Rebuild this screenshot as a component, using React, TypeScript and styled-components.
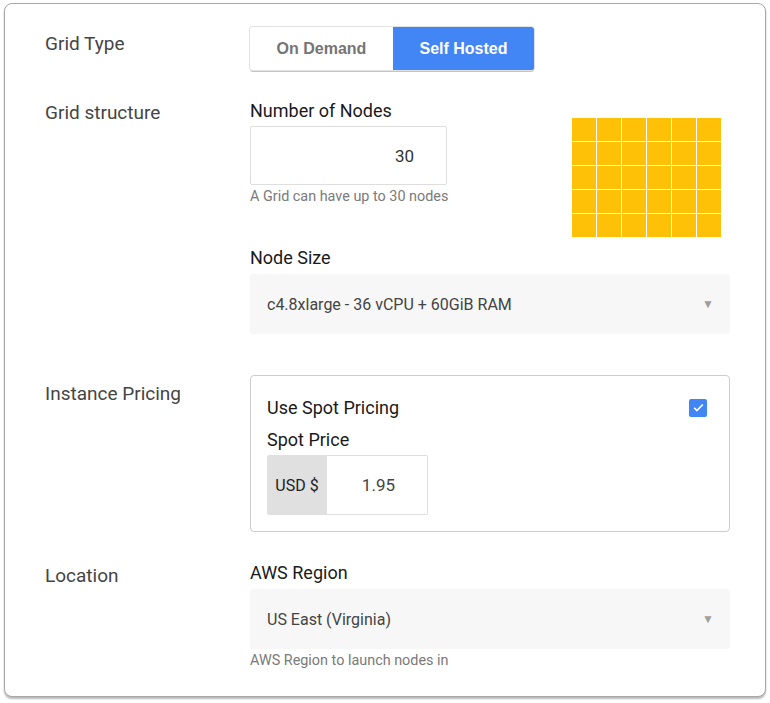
import React from "react";
import styled, { createGlobalStyle } from "styled-components";

const Global = createGlobalStyle`
  html, body { margin: 0; padding: 0; background: #fff; }
  body { font-family: Roboto, "Noto Sans", Arial, sans-serif; }
  * { box-sizing: border-box; }
`;

const Card = styled.div`
  margin: 3px 4px;
  width: 762px;
  height: 694px;
  border: 1px solid #a8a8a8;
  border-radius: 8px;
  box-shadow: 0 2px 2px rgba(0, 0, 0, 0.28);
  padding: 23px 35px 0 40px;
  background: #fff;
`;

const Section = styled.div<{ $mt?: number }>`
  display: grid;
  grid-template-columns: 205px 480px;
  margin-top: ${(p) => p.$mt ?? 0}px;
`;

const SideLabel = styled.div<{ $pt?: number }>`
  font-size: 19px;
  line-height: 22px;
  color: #454545;
  padding-top: ${(p) => p.$pt ?? 0}px;
`;

const Column = styled.div`
  display: flex;
  flex-direction: column;
`;

const Segmented = styled.div`
  display: flex;
  width: 284px;
  height: 43px;
  border-radius: 3px;
  overflow: hidden;
  box-shadow: 0 0 0 1px #e2e2e2, 0 2px 0 0 #c4c4c4;
`;

const SegButton = styled.button<{ $active?: boolean }>`
  border: none;
  margin: 0;
  flex: ${(p) => (p.$active ? "0 0 141px" : "0 0 143px")};
  height: 43px;
  font-family: "Liberation Sans", Arial, sans-serif;
  font-weight: bold;
  font-size: 16px;
  color: ${(p) => (p.$active ? "#fff" : "#757575")};
  background: ${(p) => (p.$active ? "#4285f4" : "#fff")};
  box-shadow: ${(p) => (p.$active ? "0 2px 0 0 #3a6fcc" : "none")};
  padding: 0;
`;

const FieldLabel = styled.div<{ $mt?: number }>`
  font-size: 18px;
  line-height: 21px;
  color: #1a1a1a;
  margin-top: ${(p) => p.$mt ?? 0}px;
`;

const NodesRow = styled.div`
  display: flex;
  justify-content: space-between;
  align-items: flex-start;
`;

const NumberInput = styled.div`
  width: 197px;
  height: 59px;
  margin-top: 5px;
  border: 1px solid #dedede;
  border-radius: 2px;
  display: flex;
  align-items: center;
  justify-content: flex-end;
  padding-right: 32px;
  font-size: 17px;
  color: #333;
`;

const Help = styled.div<{ $mt?: number }>`
  font-size: 14.4px;
  line-height: 16px;
  color: #7a7a7a;
  margin-top: ${(p) => p.$mt ?? 0}px;
`;

const NodeGrid = styled.div`
  display: grid;
  grid-template-columns: repeat(6, 24px);
  grid-template-rows: repeat(5, 23px);
  gap: 1px;
  margin-top: 18px;
  margin-right: 9px;
`;

const Cell = styled.div`
  background: #ffc107;
`;

const Select = styled.div`
  height: 60px;
  background: #f7f7f7;
  border-radius: 3px;
  margin-top: 6px;
  display: flex;
  align-items: center;
  justify-content: space-between;
  padding: 0 16px 0 17px;
  font-size: 16px;
  color: #444;
`;

const Caret = styled.span`
  font-size: 12px;
  color: #9e9e9e;
`;

const PricingBox = styled.div`
  border: 1px solid #cccccc;
  border-radius: 4px;
  height: 157px;
  padding: 21px 22px 0 16px;
  display: flex;
  flex-direction: column;
`;

const CheckRow = styled.div`
  display: flex;
  justify-content: space-between;
  align-items: center;
  height: 21px;
`;

const CheckText = styled.div<{ $mt?: number }>`
  font-size: 18px;
  line-height: 21px;
  color: #1a1a1a;
  margin-top: ${(p) => p.$mt ?? 0}px;
`;

const Checkbox = styled.span`
  width: 18px;
  height: 18px;
  border-radius: 2px;
  background: #4285f4;
  display: inline-flex;
  align-items: center;
  justify-content: center;
`;

const InputGroup = styled.div`
  display: flex;
  width: 161px;
  height: 60px;
  margin-top: 5px;
`;

const Addon = styled.div`
  width: 60px;
  background: #e0e0e0;
  border-radius: 2px 0 0 2px;
  display: flex;
  align-items: center;
  justify-content: center;
  font-size: 16px;
  color: #222;
`;

const PriceInput = styled.div`
  flex: 1;
  border: 1px solid #dedede;
  border-left: none;
  border-radius: 0 2px 2px 0;
  display: flex;
  align-items: center;
  justify-content: flex-end;
  padding-right: 32px;
  font-size: 17px;
  color: #444;
`;

export default function App() {
  return (
    <>
      <Global />
      <Card>
        <Section>
          <SideLabel $pt={6}>Grid Type</SideLabel>
          <Segmented>
            <SegButton>On Demand</SegButton>
            <SegButton $active>Self Hosted</SegButton>
          </Segmented>
        </Section>

        <Section $mt={30}>
          <SideLabel $pt={2}>Grid structure</SideLabel>
          <Column>
            <NodesRow>
              <Column>
                <FieldLabel>Number of Nodes</FieldLabel>
                <NumberInput>30</NumberInput>
                <Help $mt={4}>A Grid can have up to 30 nodes</Help>
              </Column>
              <NodeGrid>
                {Array.from({ length: 30 }).map((_, i) => (
                  <Cell key={i} />
                ))}
              </NodeGrid>
            </NodesRow>
            <FieldLabel $mt={10}>Node Size</FieldLabel>
            <Select>
              <span>c4.8xlarge - 36 vCPU + 60GiB RAM</span>
              <Caret>▼</Caret>
            </Select>
          </Column>
        </Section>

        <Section $mt={41}>
          <SideLabel $pt={8}>Instance Pricing</SideLabel>
          <PricingBox>
            <CheckRow>
              <CheckText>Use Spot Pricing</CheckText>
              <Checkbox>
                <svg width="13" height="13" viewBox="0 0 24 24">
                  <path d="M4 12.5l5 5L20 6.5" fill="none" stroke="#fff" strokeWidth="3" />
                </svg>
              </Checkbox>
            </CheckRow>
            <CheckText $mt={11}>Spot Price</CheckText>
            <InputGroup>
              <Addon>USD $</Addon>
              <PriceInput>1.95</PriceInput>
            </InputGroup>
          </PricingBox>
        </Section>

        <Section $mt={30}>
          <SideLabel $pt={3}>Location</SideLabel>
          <Column>
            <FieldLabel>AWS Region</FieldLabel>
            <Select>
              <span>US East (Virginia)</span>
              <Caret>▼</Caret>
            </Select>
            <Help $mt={4}>AWS Region to launch nodes in</Help>
          </Column>
        </Section>
      </Card>
    </>
  );
}
